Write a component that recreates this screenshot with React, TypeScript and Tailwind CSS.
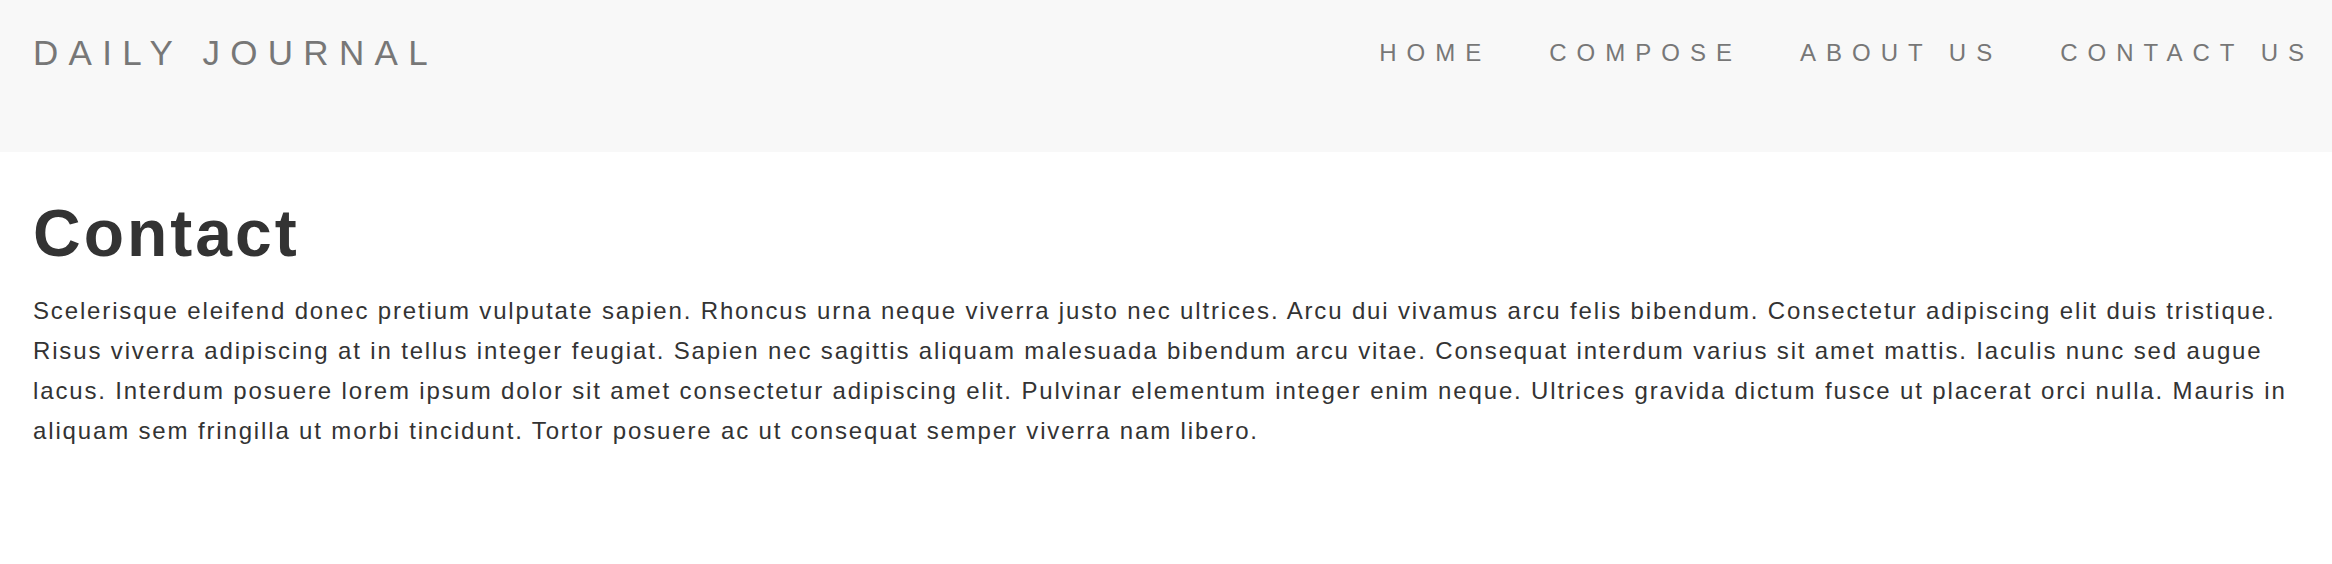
const navLinks = ["HOME", "COMPOSE", "ABOUT US", "CONTACT US"];

export default function App() {
  return (
    <div className="min-h-screen bg-white font-['Liberation_Sans',Arial,sans-serif]">
      {/* Navbar */}
      <header className="flex h-[152px] items-start justify-between bg-[#f8f8f8] pl-[33px]">
        <a href="#" className="pt-[35px] text-[35px] leading-none tracking-[10.3px] text-[#777]">
          DAILY JOURNAL
        </a>
        <ul className="flex pt-[41px]">
          {navLinks.map((link) => (
            <li key={link} className="px-[29px] last:pr-[18px]">
              <a href="#" className="block text-[24px] leading-none tracking-[10px] text-[#777]">
                {link}
              </a>
            </li>
          ))}
        </ul>
      </header>

      {/* Page content */}
      <main className="px-[33px] pt-[48px]">
        <h1 className="text-[66px] font-bold leading-none tracking-[3px] text-[#333]">Contact</h1>
        <p className="mt-[25px] text-[24px] leading-[40px] tracking-[1.85px] text-[#333]">
          Scelerisque eleifend donec pretium vulputate sapien. Rhoncus urna neque viverra justo nec ultrices. Arcu dui
          vivamus arcu felis bibendum. Consectetur adipiscing elit duis tristique. Risus viverra adipiscing at in tellus
          integer feugiat. Sapien nec sagittis aliquam malesuada bibendum arcu vitae. Consequat interdum varius sit amet
          mattis. Iaculis nunc sed augue lacus. Interdum posuere lorem ipsum dolor sit amet consectetur adipiscing elit.
          Pulvinar elementum integer enim neque. Ultrices gravida dictum fusce ut placerat orci nulla. Mauris in aliquam
          sem fringilla ut morbi tincidunt. Tortor posuere ac ut consequat semper viverra nam libero.
        </p>
      </main>
    </div>
  );
}
